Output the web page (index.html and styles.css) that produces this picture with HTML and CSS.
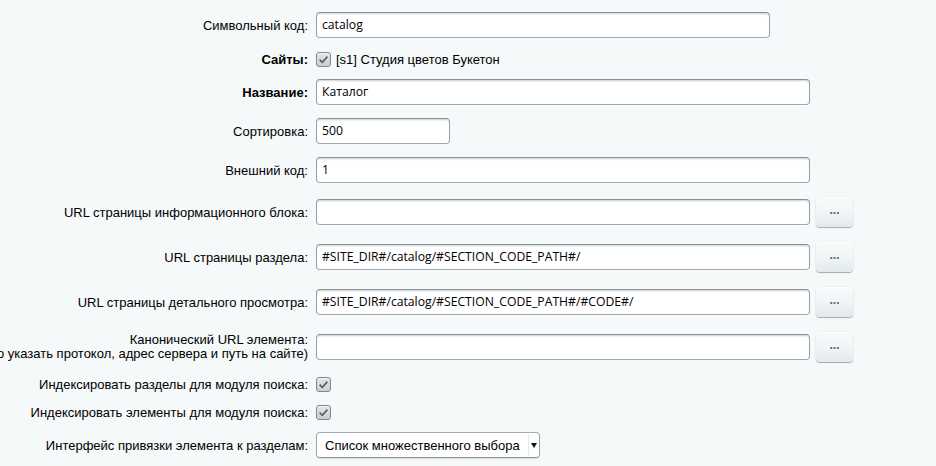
FILE: index.html
```html
<!DOCTYPE html>
<html lang="ru">
<head>
<meta charset="utf-8">
<title>Форма</title>
<link rel="stylesheet" href="styles.css">
</head>
<body>
<div class="form">
  <div class="row row-input">
    <div class="label">Символьный код:</div>
    <div class="field"><div class="input w454">catalog</div></div>
  </div>
  <div class="row row-check">
    <div class="label bold">Сайты:</div>
    <div class="field check-field">
      <span class="checkbox"><svg viewBox="0 0 15 15" width="15" height="15"><path d="M3.6 7.6 L6.3 10.3 L11.4 4.6" fill="none" stroke="#565d62" stroke-width="1.6"/></svg></span>
      <span class="check-text">[s1] Студия цветов Букетон</span>
    </div>
  </div>
  <div class="row row-input">
    <div class="label bold">Название:</div>
    <div class="field"><div class="input w494">Каталог</div></div>
  </div>
  <div class="row row-input">
    <div class="label">Сортировка:</div>
    <div class="field"><div class="input w134">500</div></div>
  </div>
  <div class="row row-input">
    <div class="label">Внешний код:</div>
    <div class="field"><div class="input w494">1</div></div>
  </div>
  <div class="row row-btn">
    <div class="label">URL страницы информационного блока:</div>
    <div class="field"><div class="input w494"></div><div class="btn">...</div></div>
  </div>
  <div class="row row-btn">
    <div class="label">URL страницы раздела:</div>
    <div class="field"><div class="input w494">#SITE_DIR#/catalog/#SECTION_CODE_PATH#/</div><div class="btn">...</div></div>
  </div>
  <div class="row row-btn">
    <div class="label">URL страницы детального просмотра:</div>
    <div class="field"><div class="input w494">#SITE_DIR#/catalog/#SECTION_CODE_PATH#/#CODE#/</div><div class="btn">...</div></div>
  </div>
  <div class="row row-btn">
    <div class="label two">Канонический URL элемента:<br>(необходимо указать протокол, адрес сервера и путь на сайте)</div>
    <div class="field"><div class="input w494"></div><div class="btn">...</div></div>
  </div>
  <div class="row row-check">
    <div class="label">Индексировать разделы для модуля поиска:</div>
    <div class="field check-field">
      <span class="checkbox"><svg viewBox="0 0 15 15" width="15" height="15"><path d="M3.6 7.6 L6.3 10.3 L11.4 4.6" fill="none" stroke="#565d62" stroke-width="1.6"/></svg></span>
    </div>
  </div>
  <div class="row row-check">
    <div class="label">Индексировать элементы для модуля поиска:</div>
    <div class="field check-field">
      <span class="checkbox"><svg viewBox="0 0 15 15" width="15" height="15"><path d="M3.6 7.6 L6.3 10.3 L11.4 4.6" fill="none" stroke="#565d62" stroke-width="1.6"/></svg></span>
    </div>
  </div>
  <div class="row row-input">
    <div class="label">Интерфейс привязки элемента к разделам:</div>
    <div class="field">
      <div class="select"><span class="select-text">Список множественного выбора</span><span class="select-arrow"></span></div>
    </div>
  </div>
</div>
</body>
</html>
```
FILE: styles.css
```css
html, body {
  margin: 0;
  padding: 0;
  background: #f5f9f9;
  overflow: hidden;
}
body {
  width: 936px;
  height: 466px;
  font-family: "Liberation Sans", Arial, sans-serif;
  font-size: 13px;
  color: #000;
}
.form {
  margin-left: -120px;
  padding-top: 6px;
}
.row {
  display: grid;
  grid-template-columns: 428px 1fr;
  column-gap: 8px;
  align-items: center;
}
.row-input { padding: 6px 0 7px; }
.row-check { padding: 7px 0 6px; }
.row-btn { padding: 7px 0 8px; }
.label {
  text-align: right;
  white-space: nowrap;
  line-height: 15px;
}
.label.two { line-height: 14px; }
.bold { font-weight: bold; }
.field {
  display: flex;
  align-items: center;
  gap: 6px;
}
.input {
  box-sizing: border-box;
  height: 26px;
  line-height: 24px;
  padding: 0 5px;
  background: #fff;
  border: 1px solid;
  border-color: #87919c #959ea9 #9ea7b1 #959ea9;
  border-radius: 4px;
  box-shadow: 0 1px 0 0 rgba(255,255,255,0.3), inset 0 2px 2px -1px rgba(180,188,191,0.7);
  font-family: "Open Sans", "Noto Sans", sans-serif;
  font-size: 12.2px;
  color: #000;
  white-space: nowrap;
  overflow: hidden;
}
.w454 { width: 454px; }
.w494 { width: 494px; }
.w134 { width: 134px; }
.btn {
  box-sizing: border-box;
  width: 37px;
  height: 30px;
  border-radius: 4px;
  background: linear-gradient(to bottom, #f8fafb 0%, #f2f5f6 50%, #e1e9ec 100%);
  box-shadow: 0 0 1px rgba(0,0,0,0.2), 0 1px 1px rgba(0,0,0,0.3), inset 0 1px #fff;
  display: flex;
  align-items: center;
  justify-content: center;
  font-size: 12px;
  font-weight: bold;
  color: #4d6580;
  line-height: 1;
  padding-bottom: 4px;
}
.check-field { gap: 5px; }
.checkbox {
  box-sizing: border-box;
  width: 15px;
  height: 15px;
  border: 1px solid #80878c;
  border-radius: 3px;
  background: linear-gradient(to bottom, #e4e7e8, #c9ced1);
  box-shadow: inset 0 1px 0 #f3f4f4;
  display: flex;
  align-items: center;
  justify-content: center;
}
.checkbox svg { display: block; flex: none; }
.check-text { line-height: 15px; }
.select {
  box-sizing: border-box;
  width: 224px;
  height: 26px;
  display: flex;
  align-items: center;
  background: #fff;
  border: 1px solid;
  border-color: #a6adb3 #9da5ab #8e969c #9da5ab;
  border-radius: 4px;
  box-shadow: 0 1px 1px rgba(0,0,0,0.12);
}
.select-text {
  flex: 1;
  padding-left: 8px;
}
.select-arrow {
  width: 10px;
  height: 22px;
  border-left: 1px solid #e4e8ea;
  position: relative;
}
.select-arrow::after {
  content: "";
  position: absolute;
  left: 2px;
  top: 9px;
  border-left: 3.5px solid transparent;
  border-right: 3.5px solid transparent;
  border-top: 5px solid #111;
}
```
